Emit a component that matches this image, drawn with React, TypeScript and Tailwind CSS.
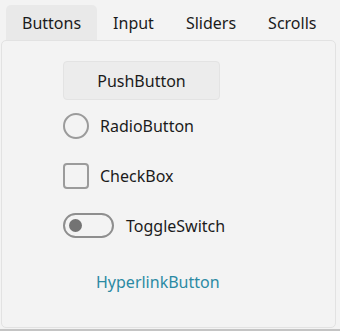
import { useState } from "react"

const tabs = ["Buttons", "Input", "Sliders", "Scrolls"]

export default function App() {
  const [active, setActive] = useState("Buttons")
  const [checked, setChecked] = useState(false)
  const [on, setOn] = useState(false)
  const [radio, setRadio] = useState(false)

  return (
    <div
      className="w-[340px] h-[331px] bg-[#f3f3f3] text-[#1b1b1b] flex flex-col overflow-hidden"
      style={{ fontFamily: '"Noto Sans", "Open Sans", sans-serif' }}
    >
      {/* Tabs */}
      <div className="flex h-[40px] pt-[5px] pl-[6px]">
        {tabs.map((t) => (
          <button
            key={t}
            onClick={() => setActive(t)}
            className={`h-[35px] px-[16px] text-[16px] rounded-t-[5px] ${
              active === t ? "bg-[#e9e9e9]" : ""
            }`}
          >
            {t}
          </button>
        ))}
      </div>

      {/* Panel */}
      <div className="ml-[1px] w-[335px] h-[288px] border border-[#e2e2e2] rounded-[5px] flex flex-col items-start pl-[61px] pt-[20px] text-[16px]">
        <button className="w-[157px] h-[39px] bg-[#ececec] border border-[#e3e3e3] rounded-[4px]">
          PushButton
        </button>

        <button onClick={() => setRadio(!radio)} className="mt-[13px] flex items-center h-[26px]">
          <span className="w-[26px] h-[26px] rounded-full border-2 border-[#9b9b9b] flex items-center justify-center">
            {radio && <span className="w-[10px] h-[10px] rounded-full bg-[#777]" />}
          </span>
          <span className="ml-[11px]">RadioButton</span>
        </button>

        <button onClick={() => setChecked(!checked)} className="mt-[24px] flex items-center h-[26px]">
          <span className="w-[26px] h-[26px] rounded-[4px] border-2 border-[#9b9b9b]" />
          <span className="ml-[11px]">CheckBox</span>
        </button>

        <button onClick={() => setOn(!on)} className="mt-[24px] flex items-center h-[25px]">
          <span
            className={`w-[51px] h-[25px] rounded-full border-2 border-[#8e8e8e] flex items-center px-[4px] ${
              on ? "justify-end" : "justify-start"
            }`}
          >
            <span className="w-[13px] h-[13px] rounded-full bg-[#737373]" />
          </span>
          <span className="ml-[12px]">ToggleSwitch</span>
        </button>

        <button className="mt-[28px] ml-[33px] h-[32px] text-[#2b8aa3]">HyperlinkButton</button>
      </div>

      <div className="mt-auto h-[2px] bg-[#c4c4c4]" />
    </div>
  )
}
